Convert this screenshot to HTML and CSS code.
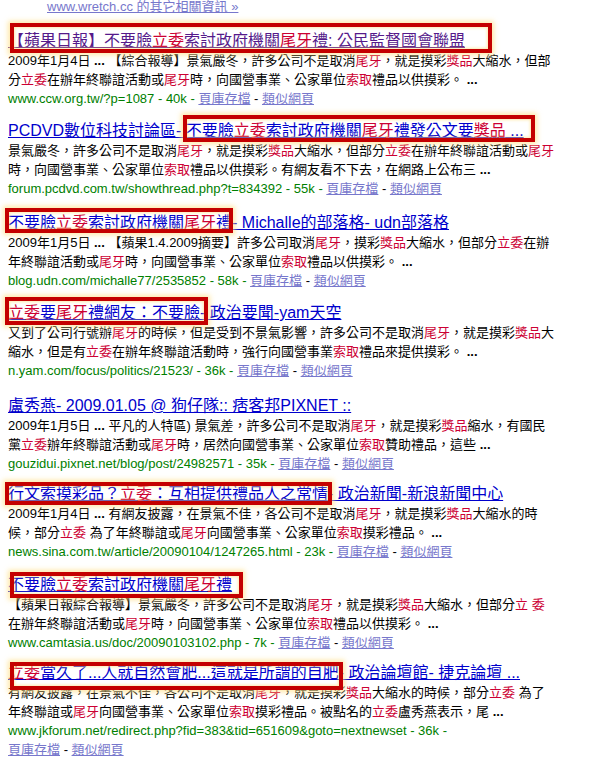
FILE: index.html
```html
<!DOCTYPE html>
<html lang="zh-Hant">
<head>
<meta charset="utf-8">
<title>搜尋結果</title>
<link rel="stylesheet" href="styles.css">
</head>
<body>
<div class="page">
  <div class="more"><a href="#">www.wretch.cc 的其它相關資訊 »</a></div>
  <ol class="results">
    <li class="g">
      <h3 class="t"><a class="visited" href="#">【蘋果日報】不要臉<em>立委</em>索討政府機關<em>尾牙</em>禮: 公民監督國會聯盟</a></h3>
      <div class="s">2009年1月4日 <b>...</b> 【綜合報導】景氣嚴冬，許多公司不是取消<em>尾牙</em>，就是摸彩<em>獎品</em>大縮水，但部<br>分<em>立委</em>在辦年終聯誼活動或<em>尾牙</em>時，向國營事業、公家單位<em>索取</em>禮品以供摸彩。 <b>...</b><br><span class="url">www.ccw.org.tw/?p=1087 - 40k - </span><a class="fl" href="#">頁庫存檔</a> - <a class="fl" href="#">類似網頁</a></div>
      <span class="mark m1"></span>
    </li>
    <li class="g">
      <h3 class="t"><a href="#">PCDVD數位科技討論區- 不要臉<em>立委</em>索討政府機關<em>尾牙</em>禮發公文要<em>獎品</em> ...</a></h3>
      <div class="s">景氣嚴冬，許多公司不是取消<em>尾牙</em>，就是摸彩<em>獎品</em>大縮水，但部分<em>立委</em>在辦年終聯誼活動或<em>尾牙</em><br>時，向國營事業、公家單位<em>索取</em>禮品以供摸彩。有網友看不下去，在網路上公布三 <b>...</b><br><span class="url">forum.pcdvd.com.tw/showthread.php?t=834392 - 55k - </span><a class="fl" href="#">頁庫存檔</a> - <a class="fl" href="#">類似網頁</a></div>
      <span class="mark m2"></span>
    </li>
    <li class="g">
      <h3 class="t"><a href="#">不要臉<em>立委</em>索討政府機關<em>尾牙</em>禮- Michalle的部落格- udn部落格</a></h3>
      <div class="s">2009年1月5日 <b>...</b> 【蘋果1.4.2009摘要】許多公司取消<em>尾牙</em>，摸彩<em>獎品</em>大縮水，但部分<em>立委</em>在辦<br>年終聯誼活動或<em>尾牙</em>時，向國營事業、公家單位<em>索取</em>禮品以供摸彩。 <b>...</b><br><span class="url">blog.udn.com/michalle77/2535852 - 58k - </span><a class="fl" href="#">頁庫存檔</a> - <a class="fl" href="#">類似網頁</a></div>
      <span class="mark m3"></span>
    </li>
    <li class="g">
      <h3 class="t"><a href="#"><em>立委</em>要<em>尾牙</em>禮網友：不要臉- 政治要聞-yam天空</a></h3>
      <div class="s">又到了公司行號辦<em>尾牙</em>的時候，但是受到不景氣影響，許多公司不是取消<em>尾牙</em>，就是摸彩<em>獎品</em>大<br>縮水，但是有<em>立委</em>在辦年終聯誼活動時，強行向國營事業<em>索取</em>禮品來提供摸彩。 <b>...</b><br><span class="url">n.yam.com/focus/politics/21523/ - 36k - </span><a class="fl" href="#">頁庫存檔</a> - <a class="fl" href="#">類似網頁</a></div>
      <span class="mark m4"></span>
    </li>
    <li class="g">
      <h3 class="t"><a href="#">盧秀燕- 2009.01.05 @ 狗仔隊:: 痞客邦PIXNET ::</a></h3>
      <div class="s">2009年1月5日 <b>...</b> 平凡的人特區) 景氣差，許多公司不是取消<em>尾牙</em>，就是摸彩<em>獎品</em>縮水，有國民<br>黨<em>立委</em>辦年終聯誼活動或<em>尾牙</em>時，居然向國營事業、公家單位<em>索取</em>贊助禮品，這些 <b>...</b><br><span class="url">gouzidui.pixnet.net/blog/post/24982571 - 35k - </span><a class="fl" href="#">頁庫存檔</a> - <a class="fl" href="#">類似網頁</a></div>
    </li>
    <li class="g">
      <h3 class="t"><a href="#">行文索摸彩品？<em>立委</em>：互相提供禮品人之常情- 政治新聞-新浪新聞中心</a></h3>
      <div class="s">2009年1月4日 <b>...</b> 有網友披露，在景氣不佳，各公司不是取消<em>尾牙</em>，就是摸彩<em>獎品</em>大縮水的時<br>候，部分<em>立委</em> 為了年終聯誼或<em>尾牙</em>向國營事業、公家單位<em>索取</em>摸彩禮品。 <b>...</b><br><span class="url">news.sina.com.tw/article/20090104/1247265.html - 23k - </span><a class="fl" href="#">頁庫存檔</a> - <a class="fl" href="#">類似網頁</a></div>
      <span class="mark m5"></span>
    </li>
    <li class="g">
      <h3 class="t"><a href="#">不要臉<em>立委</em>索討政府機關<em>尾牙</em>禮</a></h3>
      <div class="s">【蘋果日報綜合報導】景氣嚴冬，許多公司不是取消<em>尾牙</em>，就是摸彩<em>獎品</em>大縮水，但部分<em>立 委</em><br>在辦年終聯誼活動或<em>尾牙</em>時，向國營事業、公家單位<em>索取</em>禮品以供摸彩。 <b>...</b><br><span class="url">www.camtasia.us/doc/20090103102.php - 7k - </span><a class="fl" href="#">頁庫存檔</a> - <a class="fl" href="#">類似網頁</a></div>
      <span class="mark m6"></span>
    </li>
    <li class="g">
      <h3 class="t"><a href="#"><em>立委</em>當久了...人就自然會肥...這就是所謂的自肥- 政治論壇館- 捷克論壇 ...</a></h3>
      <div class="s">有網友披露，在景氣不佳，各公司不是取消<em>尾牙</em>，就是摸彩<em>獎品</em>大縮水的時候，部分<em>立委</em> 為了<br>年終聯誼或<em>尾牙</em>向國營事業、公家單位<em>索取</em>摸彩禮品。被點名的<em>立委</em>盧秀燕表示，尾 <b>...</b><br><span class="url">www.jkforum.net/redirect.php?fid=383&amp;tid=651609&amp;goto=nextnewset - 36k - </span><br><a class="fl" href="#">頁庫存檔</a> - <a class="fl" href="#">類似網頁</a></div>
      <span class="mark m7"></span>
    </li>
  </ol>
</div>
</body>
</html>
```

FILE: styles.css
```css
html, body {
  margin: 0;
  padding: 0;
  background: #ffffff;
}

body {
  font-family: "Liberation Sans", "Noto Sans CJK TC", sans-serif;
  color: #000000;
  overflow: hidden;
}

.page {
  padding-left: 8px;
}

.more {
  margin-top: -3px;
  padding-left: 39px;
  font-size: 13px;
  line-height: 19px;
}

.more a {
  color: #7777cc;
  text-decoration: underline;
}

.results {
  list-style: none;
  margin: 14px 0 0 0;
  padding: 0;
}

.g {
  position: relative;
  margin: 0 0 12px 0;
}

.g:nth-child(2) { margin-bottom: 14px; }
.g:nth-child(4) { margin-bottom: 15px; }
.g:nth-child(5) { margin-bottom: 10px; }
.g:nth-child(6) { margin-bottom: 13px; }
.g:nth-child(7) { margin-bottom: 10px; }

.t {
  margin: 0;
  font-size: 16px;
  font-weight: normal;
  line-height: 21px;
  white-space: nowrap;
}

.t a {
  color: #0000cc;
  text-decoration: underline;
}

.t a.visited {
  color: #551a8b;
}

em {
  font-style: normal;
  color: #cc0033;
}

.s {
  font-size: 13px;
  line-height: 19px;
  white-space: nowrap;
}

.s b {
  font-weight: bold;
}

.url {
  color: #008000;
}

.fl {
  color: #7777cc;
  text-decoration: underline;
}

.mark {
  position: absolute;
  box-sizing: border-box;
  border: 4px solid #c40000;
  box-shadow: 0 0 5px 2px rgba(255, 225, 140, 0.75), inset 0 0 3px 1px rgba(255, 225, 140, 0.7);
  pointer-events: none;
}

.m1 { left: 2px;   top: -7px; width: 482px; height: 30px; }
.m2 { left: 175px; top: -5px; width: 352px; height: 27px; }
.m3 { left: -3px;  top: -4px; width: 228px; height: 25px; }
.m4 { left: -3px;  top: -5px; width: 203px; height: 28px; }
.m5 { left: -3px;  top: -1px; width: 327px; height: 23px; }
.m6 { left: 2px;   top: -2px; width: 233px; height: 26px; }
.m7 { left: 2px;   top: 0px;  width: 333px; height: 28px; }
```
